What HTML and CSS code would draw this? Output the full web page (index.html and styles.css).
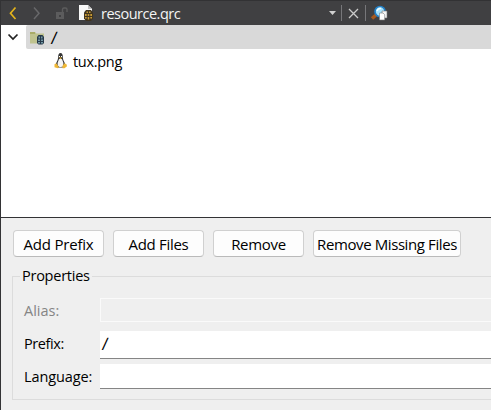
FILE: index.html
```html
<!DOCTYPE html>
<html lang="en">
<head>
<meta charset="utf-8">
<title>resource.qrc</title>
<link rel="stylesheet" href="styles.css">
</head>
<body>
<main class="editor">
  <header class="toolbar">
    <svg class="nav" width="78" height="25" fill="none">
      <path d="M15.500 7.500 10.500 13.200 15.500 19" stroke="#e3b31c" stroke-width="1.700"/>
      <path d="M34 7.500 39 13.200 34 19" stroke="#68686a" stroke-width="1.500"/>
      <path d="M56 12h8v7h-8z" fill="#5c5c5d"/>
      <path d="M62.500 13V9.500q0-1.500 1.500-1.500h1.500q1.500 0 1.500 1.500V12" stroke="#5c5c5d" stroke-width="1.400"/>
      <path d="M59 15h2v2h-2z" fill="#404042"/>
    </svg>
    <svg class="file" width="18" height="25">
      <path d="M1 5h9l4 4v11H1z" fill="#f8f8f8"/>
      <path d="M10 5v4h4z" fill="#c0c0c0"/>
      <path d="M8 10h5l2 2.500v6L13 21H8l-2-2.500v-6z" fill="#40341f"/>
      <path d="M8.500 11.500H10V13H8.500zm2.500 0h1.500V13H11zM7 14h1.700v2H7zm2.700 0h1.600v2H9.700zm2.600 0H14v2h-1.700zM7 17h1.700v1.500H7zm2.700 0h1.600v2.500H9.700zm2.600 0H14v1.500h-1.700z" fill="#c79a35"/>
    </svg>
    <span class="filename">resource.qrc</span>
    <svg class="tools" width="72" height="25">
      <path d="M9 11h7l-3.500 4z" fill="#d0d0d0"/>
      <path d="M21.500 5v16M45.500 5v16" stroke="#77777a"/>
      <path d="m29 9 9 9m0-9-9 9" stroke="#cacaca" stroke-width="1.300"/>
      <path d="m52 18.500 4-3.500" stroke="#a6591d" stroke-width="3.500"/>
      <circle cx="60" cy="11.500" r="5" fill="#a8e2fb" stroke="#2481c7" stroke-width="1.700"/>
      <path d="M57 11q1-3 4-2.500" stroke="#effcff" stroke-width="1.500" fill="none"/>
      <path d="M62 11h5v7h-5z" fill="#f5f5f5" stroke="#777" stroke-width=".6"/>
      <path d="M59.500 13h3.500l1.700 1.700V20h-5.200z" fill="#fff" stroke="#777" stroke-width=".6"/>
    </svg>
  </header>
  <section class="tree">
    <div class="root">
      <svg class="expander" width="25" height="24" fill="none"><path d="m7.500 9.500 4.500 4.500 4.500-4.500" stroke="#222" stroke-width="1.700"/></svg>
      <div class="selection">
        <svg class="folder" width="20" height="24">
          <path d="M4 7h5l1.500 1.500H18v10H4z" fill="#bfc38f"/>
          <path d="M4 7h5v2H4z" fill="#a9ac68"/>
          <path d="M12.500 10h4l1.500 2v6l-1.500 1.500h-4L11 18v-6z" fill="#26394a"/>
          <path d="M12.500 11.500H14v2h-1.500zm2.500 0h1.500v2H15zm-3 3h2v1.500h-2zm3 0h2v1.500h-2zm-3 2.500h2v1.500h-2zm3 0h2v1.500h-2z" fill="#759aa5"/>
        </svg>
        <span class="slash">/</span>
      </div>
    </div>
    <div class="leaf">
      <svg width="15" height="24">
        <path d="M7.500 4Q5 4 5.200 8.500 5 11 3 14.500L4.500 18.500h6l1.500-4Q9.800 11 9.800 8.500 10 4 7.500 4Z" fill="#353535"/>
        <path d="M7.500 9.500Q5.500 9.500 5.300 12 4 14 4.700 16.500l2 1.700 3.500-.7q1-3.500-.5-5.500Q9.500 9.500 7.500 9.500Z" fill="#f5f5f5"/>
        <path d="M6 8.500h3l-1.500 1.700zM1.500 15.300l1.700-1L6 18l-1.200 1.300L1.500 18.300zm12 0-2-1-2 2.500v2.400h2l2.500-2z" fill="#efb735"/>
        <path d="M6 7h1v1H6zm2 0h1v1H8z" fill="#fff"/>
      </svg>
      <span>tux.png</span>
    </div>
  </section>
  <section class="panel">
    <div class="buttons">
      <button class="add-prefix">Add Prefix</button>
      <button class="add-files">Add Files</button>
      <button class="remove">Remove</button>
      <button class="missing">Remove Missing Files</button>
    </div>
    <fieldset class="properties">
      <legend>Properties</legend>
      <div class="field disabled"><span class="label alias">Alias:</span><div class="input"></div></div>
      <div class="field"><span class="label prefix">Prefix:</span><div class="input"><span class="value">/</span></div></div>
      <div class="field"><span class="label language">Language:</span><div class="input"></div></div>
    </fieldset>
  </section>
</main>
</body>
</html>
```
FILE: styles.css
```css
* { box-sizing: border-box; }
body {
  margin: 0;
  overflow: hidden;
  font: 14.5px/20px "Open Sans", "Noto Sans", sans-serif;
  letter-spacing: -.3px;
  color: #000;
}
svg { display: block; flex: none; }
.editor {
  height: 410px;
  border-left: 1px solid #333335;
  background: #efefef;
  overflow: hidden;
}
.toolbar {
  display: flex;
  height: 25px;
  margin-left: -1px;
  background: #404042;
  border-top: 1px solid #323234;
  color: #f4f4f4;
}
.toolbar svg { margin-top: -1px; }
.filename {
  width: 219px;
  margin: 3px 0 0 5px;
  letter-spacing: -.5px;
}
.tree {
  height: 193px;
  background: #fff;
  border-bottom: 1px solid #333335;
}
.root { display: flex; height: 24px; }
.selection {
  display: flex;
  flex: 1;
  border-radius: 2px 0 0 2px;
  background: #d9d9d9;
}
.slash {
  margin: 3px 0 0 5px;
  font-size: 17px;
  transform: skewX(-5deg);
}
.leaf {
  display: flex;
  height: 26px;
  padding-left: 52px;
  gap: 5px;
}
.leaf span { margin-top: 3px; }
.panel { padding: 12px 0 0 12px; }
.buttons { display: flex; gap: 9px; }
button {
  width: 91px;
  height: 27px;
  padding: 0;
  border: 1px solid #d0d0d0;
  border-bottom-color: #bababa;
  border-radius: 4px;
  background: #fdfdfd;
  color: #000;
  font: 15px/20px "Open Sans", "Noto Sans", sans-serif;
  letter-spacing: -.3px;
  white-space: nowrap;
}
.add-prefix { letter-spacing: -.2px; }
.missing { width: 148px; letter-spacing: -.4px; }
.properties {
  height: 134px;
  width: 490px;
  margin: 9px 0 0 -1px;
  padding: 12px 0 0 11px;
  border: 1px solid #dcdcdc;
}
legend {
  height: 20px;
  padding: 0 2px;
  margin-left: -4px;
  letter-spacing: -.25px;
}
.field {
  display: grid;
  grid-template-columns: 76px 1fr;
  height: 25px;
  margin-bottom: 8px;
}
.label { padding-top: 3px; }
.alias { letter-spacing: 0; }
.prefix { letter-spacing: -.4px; }
.language { letter-spacing: -.1px; }
.input {
  padding: 3px 2px;
  background: #fff;
  border-bottom: 1px solid #858585;
}
.value {
  display: inline-block;
  font-size: 17px;
  transform: skewX(-5deg);
}
.disabled .label { color: #858585; }
.disabled .input {
  height: 24px;
  border: 1px solid #fafafa;
  background: #efefef;
}
```
